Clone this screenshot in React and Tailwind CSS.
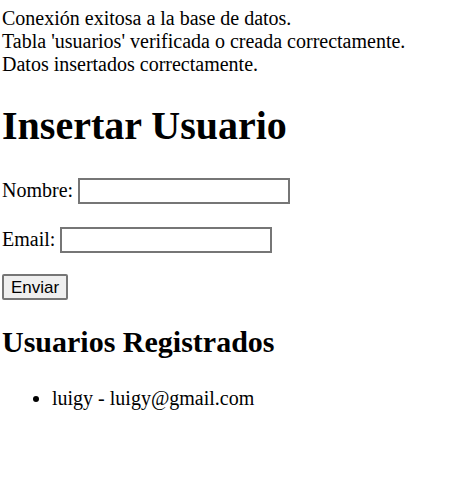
export default function App() {
  return (
    <div className="min-h-[482px] bg-white pl-[2px] pt-[7px] font-['Liberation_Serif',serif] text-[20px] leading-[1.15] text-black">
      {/* Mensajes de conexión */}
      <div>
        Conexión exitosa a la base de datos.
        <br />
        Tabla 'usuarios' verificada o creada correctamente.
        <br />
        Datos insertados correctamente.
      </div>

      <h1 className="my-[27px] text-[40px] font-bold leading-[1.15]">Insertar Usuario</h1>

      <form onSubmit={(e) => e.preventDefault()}>
        <p className="my-[20px] flex h-[29px] items-center gap-[5px]">
          <span>Nombre:</span>
          <input
            type="text"
            className="h-[26px] w-[212px] border-2 border-[#767676] bg-white px-1 font-['Liberation_Sans',sans-serif] text-[16px] outline-none"
          />
        </p>
        <p className="my-[20px] flex h-[29px] items-center gap-[5px]">
          <span>Email:</span>
          <input
            type="email"
            className="h-[26px] w-[212px] border-2 border-[#767676] bg-white px-1 font-['Liberation_Sans',sans-serif] text-[16px] outline-none"
          />
        </p>
        <button
          type="submit"
          className="h-[26px] w-[66px] rounded-[2px] border-2 border-[#767676] bg-[#efefef] font-['Liberation_Sans',sans-serif] text-[17px] leading-none text-black"
        >
          Enviar
        </button>
      </form>

      <h2 className="mt-[25px] mb-[27px] text-[30px] font-bold leading-[1.15]">Usuarios Registrados</h2>
      <ul className="list-disc pl-[50px]">
        <li>luigy - luigy@gmail.com</li>
      </ul>
    </div>
  );
}
